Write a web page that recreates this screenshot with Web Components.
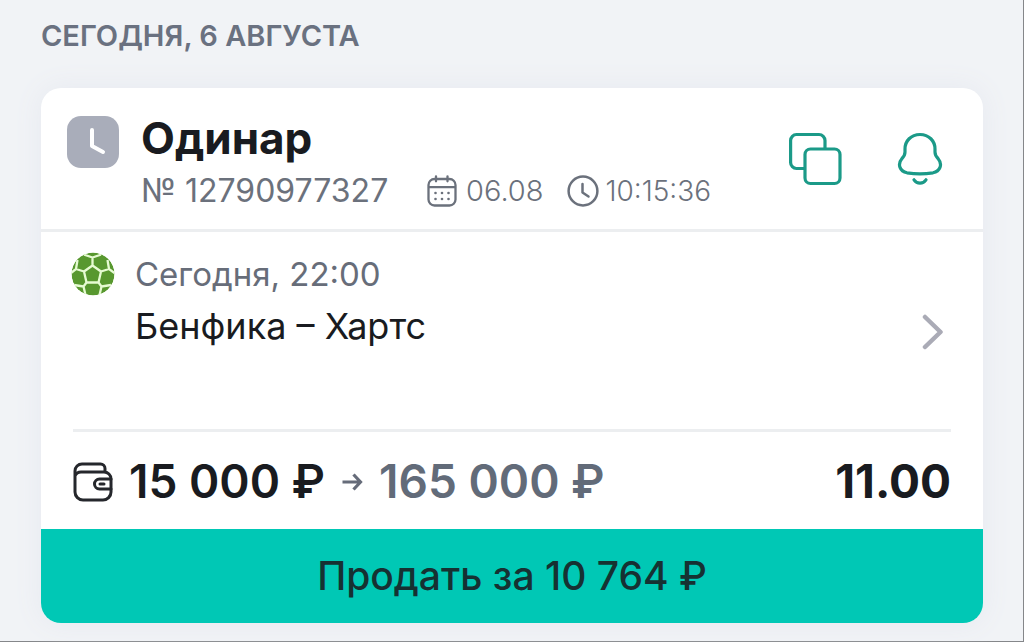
<!DOCTYPE html>
<html lang="ru">
<head>
<meta charset="utf-8">
<meta name="viewport" content="width=device-width, initial-scale=1">
<title>История ставок</title>
<style>
  body { margin: 0; background: #f1f3f6; font-family: Inter, "Noto Sans", sans-serif; color: #191b20; }
</style>
</head>
<body>
<bet-history>
  <span slot="date">СЕГОДНЯ, 6 АВГУСТА</span>
  <bet-card>
    <bet-header slot="header">
      <span slot="title">Одинар</span>
      <span slot="number">№ 12790977327</span>
      <time slot="date" datetime="08-06">06.08</time>
      <time slot="time" datetime="10:15:36">10:15:36</time>
    </bet-header>
    <bet-event slot="event">
      <span slot="when">Сегодня, 22:00</span>
      <span slot="teams">Бенфика – Хартс</span>
    </bet-event>
    <bet-total slot="total">
      <span slot="stake">15 000 ₽</span>
      <span slot="win">165 000 ₽</span>
      <span slot="odds">11.00</span>
    </bet-total>
    <sell-button slot="action">Продать за 10 764 ₽</sell-button>
  </bet-card>
</bet-history>

<script>
const define = (name, html) => {
  const template = document.createElement('template');
  template.innerHTML = html;
  customElements.define(name, class extends HTMLElement {
    constructor() {
      super();
      this.attachShadow({ mode: 'open' }).append(template.content.cloneNode(true));
    }
  });
};

const icons = {
  pending: [52, 52, '<rect width="52" height="52" rx="14" fill="#a9adba"/><path d="M25 14v16l11 6" fill="none" stroke="#fff" stroke-width="4" stroke-linecap="round" stroke-linejoin="round"/>'],
  calendar: [30, 32, '<g fill="none" stroke="#6b717c" stroke-width="2.3" stroke-linecap="round"><rect x="1.5" y="4" width="27" height="26.5" rx="6"/><path d="M2 12.2h26M9 1.3v5M20.5 1.3v5"/></g><g fill="#6b717c"><circle cx="8.5" cy="18" r="1.3"/><circle cx="15" cy="18" r="1.3"/><circle cx="21.5" cy="18" r="1.3"/><circle cx="8.5" cy="24" r="1.3"/><circle cx="15" cy="24" r="1.3"/><circle cx="21.5" cy="24" r="1.3"/></g>'],
  clock: [32, 32, '<g fill="none" stroke="#6b717c" stroke-width="2.5" stroke-linecap="round" stroke-linejoin="round"><circle cx="16" cy="16" r="14.4"/><path d="M15.5 9v8.5l6 4"/></g>'],
  copy: [54, 54, '<g fill="none" stroke="#1b9a88" stroke-width="3.2"><path d="M16 36.500H7.500A6 6 0 0 1 1.600 30.500V8.500A6 6 0 0 1 7.500 2.500H30A6 6 0 0 1 36 8.500V17"/><rect x="16" y="17" width="35" height="34.500" rx="5.500"/></g>'],
  bell: [46, 54, '<g fill="none" stroke="#1b9a88" stroke-width="3.2" stroke-linecap="round" stroke-linejoin="round"><path d="M23 2.500C14 2.500 8 9 8 17v3c0 3-1 4.500-3 6.500-5 6-2 13 5 14.300 8 1.200 18 1.200 26 0 7-1.300 10-8.300 5-14.300-2-2-3-3.500-3-6.500v-3C38 9 32 2.500 23 2.500z"/><path d="M17 47.800c3 4.300 9 4.300 12 0"/></g>'],
  ball: [44, 44, '<defs><clipPath id="disc"><circle cx="22" cy="22" r="21.500"/></clipPath></defs><g clip-path="url(#disc)"><circle cx="22" cy="22" r="21.500" fill="#58982f"/><path d="M21.500 13.500L30 19.500 27.500 30.500H15.500L13 19.500zM21.500 13.500V5.500M12 0.500L14 3 21.500 5.500 29 3 31 0.500M13 19.500L5 17 0 21M5 17L6.500 8M30 19.500L38 17 43.500 21M38 17L36.500 8M15.500 30.500L12.500 34.500 14.500 43M12.500 34.500L3 33M27.500 30.500L30.500 34.500 28.500 43M30.500 34.500L40 33" fill="none" stroke="#e6fbd2" stroke-width="2.300" stroke-linejoin="round"/></g>'],
  chevron: [22, 36, '<path d="M3 3l15.500 15L3 33" fill="none" stroke="#aaabb6" stroke-width="4.500" stroke-linecap="round" stroke-linejoin="round"/>'],
  wallet: [40, 40, '<g fill="none" stroke="#25272c" stroke-width="3" stroke-linecap="round" stroke-linejoin="round"><path d="M2 12v18a8 8 0 0 0 8 8h20a8 8 0 0 0 8-8V17a7 7 0 0 0-7-7H8c-3 0-5 1.500-6 4V9a7 7 0 0 1 7-7h18.500a4.500 4.500 0 0 1 4.500 4.500V10"/><path d="M38 17H26.500a5 5 0 0 0 0 10H38"/><path d="M27 22h4"/></g>'],
  arrow: [22, 20, '<path d="M1.500 10h17M12.500 2.500l7 7.500-7 7.500" fill="none" stroke="#666c7a" stroke-width="3.200"/>']
};
const icon = name => {
  const [w, h, body] = icons[name];
  return `<svg width="${w}" height="${h}" viewBox="0 0 ${w} ${h}" aria-hidden="true">${body}</svg>`;
};
const base = '<style>* { box-sizing: border-box; } svg { display: block; flex: none; }</style>';

define('bet-history', `${base}<style>
  :host { display: block; box-sizing: border-box; min-height: 100vh; padding: 20px 40px 18px 41px; border: solid #85878a; border-width: 0 1px 1px 0; }
  h2 { margin: 0 0 36px; font-size: 29px; line-height: 32px; font-weight: 600; color: #6a7180; }
</style><h2><slot name="date"></slot></h2><slot></slot>`);

define('bet-card', `${base}<style>
  :host { display: block; overflow: hidden; background: #fff; border-radius: 20px; box-shadow: 0 0 28px #e6e9f0; }
</style><article><slot name="header"></slot><slot name="event"></slot><slot name="total"></slot><slot name="action"></slot></article>`);

define('bet-header', `${base}<style>
  :host { display: block; }
  header { display: flex; justify-content: space-between; padding: 24px 40px 18px 26px; border-bottom: 3px solid #eceef0; }
  .main { display: flex; gap: 22px; }
  .main > svg { margin-top: 4px; }
  h1 { margin: 0; font-size: 44px; line-height: 52px; font-weight: 700; }
  .meta { display: flex; align-items: center; gap: 24px; margin-top: 7px; line-height: 40px; color: #6b717c; white-space: nowrap; }
  .number { font-size: 32px; font-weight: 400; min-width: 262px; }
  .item { display: flex; align-items: center; gap: 9px; font-size: 29px; font-weight: 300; }
  .item + .item { gap: 6px; font-size: 28px; }
  .tools { display: flex; align-items: flex-start; gap: 54px; padding-top: 20px; }
  button { display: block; padding: 0; border: 0; background: none; cursor: pointer; }
</style><header>
  <div class="main">${icon('pending')}<div>
    <h1><slot name="title"></slot></h1>
    <div class="meta"><span class="number"><slot name="number"></slot></span>
      <span class="item">${icon('calendar')}<slot name="date"></slot></span>
      <span class="item">${icon('clock')}<slot name="time"></slot></span></div>
  </div></div>
  <div class="tools"><button type="button" aria-label="Скопировать">${icon('copy')}</button><button type="button" aria-label="Уведомления">${icon('bell')}</button></div>
</header>`);

define('bet-event', `${base}<style>
  :host { display: block; padding: 0 32px; }
  a { display: flex; align-items: flex-start; min-height: 200px; padding: 16px 7px 0 0; border-bottom: 3px solid #eceef0; color: inherit; text-decoration: none; }
  .ball { padding: 4px 20px 0 0; margin-left: -2px; }
  .text { flex: 1; }
  .when { font-size: 33px; line-height: 52px; color: #676d79; }
  .teams { font-size: 36px; line-height: 52px; }
  .go { padding-top: 66px; }
</style><a href="#event">
  <span class="ball">${icon('ball')}</span>
  <div class="text"><div class="when"><slot name="when"></slot></div><div class="teams"><slot name="teams"></slot></div></div>
  <span class="go">${icon('chevron')}</span>
</a>`);

define('bet-total', `${base}<style>
  :host { display: flex; align-items: center; gap: 16px; padding: 23px 32px 21px; font-size: 46px; line-height: 53px; font-weight: 600; white-space: nowrap; }
  .win { color: #626b79; }
  .odds { margin-left: auto; font-weight: 700; }
</style>${icon('wallet')}<span><slot name="stake"></slot></span>${icon('arrow')}<span class="win"><slot name="win"></slot></span><span class="odds"><slot name="odds"></slot></span>`);

define('sell-button', `${base}<style>
  :host { display: block; }
  button { display: block; width: 100%; padding: 20px; border: 0; background: #00c8b5; color: #163132; font: 500 39px/54px Inter, "Noto Sans", sans-serif; cursor: pointer; }
</style><button type="button"><slot></slot></button>`);
</script>
</body>
</html>
